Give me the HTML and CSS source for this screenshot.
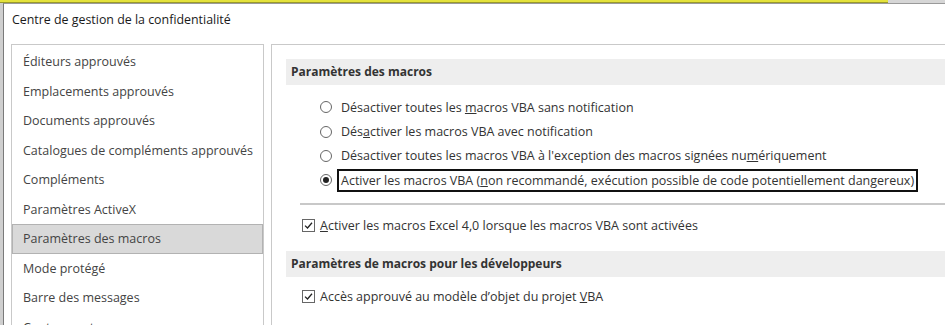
FILE: index.html
```html
<!DOCTYPE html>
<html lang="fr">
<head>
    <meta charset="UTF-8">
    <meta name="viewport" content="width=device-width, initial-scale=1.0">
    <title>Centre de gestion de la confidentialité</title>
    <link rel="stylesheet" href="styles.css">
</head>
<body>
    <div class="excel-strip">
        <div class="cells"></div>
    </div>
    <div class="dialog">
        <div class="title">Centre de gestion de la confidentialité</div>
        <div class="dialog-body">
            <div class="nav">
                <div class="nav-item">Éditeurs approuvés</div>
                <div class="nav-item">Emplacements approuvés</div>
                <div class="nav-item">Documents approuvés</div>
                <div class="nav-item">Catalogues de compléments approuvés</div>
                <div class="nav-item">Compléments</div>
                <div class="nav-item">Paramètres ActiveX</div>
                <div class="nav-item selected">Paramètres des macros</div>
                <div class="nav-item">Mode protégé</div>
                <div class="nav-item">Barre des messages</div>
                <div class="nav-item">Contenu externe</div>
            </div>
            <div class="pane">
                <div class="section-head">Paramètres des macros</div>
                <div class="radios">
                    <div class="radio-row">
                        <span class="radio"></span>
                        <span class="label">Désactiver toutes les <u>m</u>acros VBA sans notification</span>
                    </div>
                    <div class="radio-row">
                        <span class="radio"></span>
                        <span class="label">Dés<u>a</u>ctiver les macros VBA avec notification</span>
                    </div>
                    <div class="radio-row">
                        <span class="radio"></span>
                        <span class="label">Désactiver toutes les macros VBA à l'exception des macros signées nu<u>m</u>ériquement</span>
                    </div>
                    <div class="radio-row">
                        <span class="radio checked"></span>
                        <span class="label focused">Activer les macros VBA (<u>n</u>on recommandé, exécution possible de code potentiellement dangereux)</span>
                    </div>
                </div>
                <div class="separator"></div>
                <div class="check-row first">
                    <span class="checkbox">
                        <svg width="9" height="9" viewBox="0 0 9 9"><path d="M1 4.6 L3.5 7 L8 1.8" fill="none" stroke="#222" stroke-width="1.3"/></svg>
                    </span>
                    <span class="label"><u>A</u>ctiver les macros Excel 4,0 lorsque les macros VBA sont activées</span>
                </div>
                <div class="section-head second">Paramètres de macros pour les développeurs</div>
                <div class="check-row last">
                    <span class="checkbox">
                        <svg width="9" height="9" viewBox="0 0 9 9"><path d="M1 4.6 L3.5 7 L8 1.8" fill="none" stroke="#222" stroke-width="1.3"/></svg>
                    </span>
                    <span class="label">Accès approuvé au modèle d’objet du projet <u>V</u>BA</span>
                </div>
            </div>
        </div>
    </div>
</body>
</html>
```

FILE: styles.css
```css
body {
    margin: 0;
    padding: 0;
    width: 945px;
    height: 325px;
    overflow: hidden;
    background: #cfcfcf;
    font-family: "Segoe UI", "Open Sans", sans-serif;
    font-size: 12.5px;
    color: #333;
}
.excel-strip {
    height: 3px;
    background: #d6d6d6;
}
.cells {
    width: 888px;
    height: 3px;
    background: #e4e23c;
    border-bottom: 1px solid #9a9a2a;
    box-sizing: border-box;
}
.dialog {
    margin-left: 3px;
    height: 322px;
    background: #fff;
    border-top: 1px solid #9a9a9a;
    border-left: 1px solid #7a7a7a;
    box-sizing: border-box;
    overflow: hidden;
}
.title {
    height: 40px;
    padding-left: 8px;
    line-height: 32px;
    font-size: 12.4px;
    color: #1a1a1a;
}
.dialog-body {
    display: flex;
    gap: 7px;
    padding-left: 7px;
    height: 281px;
}
.nav {
    width: 253px;
    height: 290px;
    flex-shrink: 0;
    border: 1px solid #c9c9c9;
    box-sizing: border-box;
    padding-top: 2px;
}
.nav-item {
    height: 29.5px;
    line-height: 29.5px;
    padding-left: 11px;
    color: #444;
    white-space: nowrap;
    box-sizing: border-box;
}
.nav-item.selected {
    background: #d9d9d9;
    border: 1px solid #b2b2b2;
    line-height: 27.5px;
    padding-left: 10px;
}
.pane {
    flex: 1;
    height: 290px;
    border-top: 1px solid #c9c9c9;
    border-left: 1px solid #c9c9c9;
    padding: 14px 0 0 14px;
    box-sizing: border-box;
    white-space: nowrap;
}
.section-head {
    height: 26px;
    line-height: 26px;
    padding-left: 5px;
    background: #eeeeee;
    font-weight: bold;
    font-size: 12px;
    color: #333;
}
.section-head.second {
    margin-top: 13px;
}
.radios {
    margin-top: 10px;
    padding-left: 34px;
}
.radio-row {
    height: 24.4px;
    display: flex;
    align-items: center;
}
.radio {
    width: 12px;
    height: 12px;
    border: 1px solid #666;
    border-radius: 50%;
    box-sizing: border-box;
    position: relative;
    flex-shrink: 0;
}
.radio.checked::after {
    content: "";
    position: absolute;
    left: 2px;
    top: 2px;
    width: 6px;
    height: 6px;
    border-radius: 50%;
    background: #222;
}
.label {
    margin-left: 5px;
    padding: 0 2px;
    border: 2px solid transparent;
    line-height: 19px;
}
.label.focused {
    border-color: #111;
}
.separator {
    margin: 10px 0 0 14px;
    height: 2px;
    background: #c8c8c8;
}
.check-row {
    height: 24px;
    display: flex;
    align-items: center;
    padding-left: 16px;
}
.check-row.first {
    margin-top: 9px;
}
.check-row.last {
    margin-top: 8px;
}
.checkbox {
    width: 13px;
    height: 13px;
    border: 1px solid #666;
    box-sizing: border-box;
    display: flex;
    align-items: center;
    justify-content: center;
    flex-shrink: 0;
}
.check-row .label {
    margin-left: 1px;
}
```
